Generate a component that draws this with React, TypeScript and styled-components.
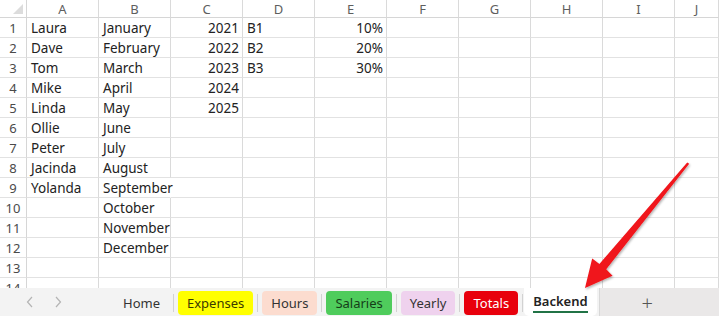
import styled, { createGlobalStyle } from "styled-components";

const GlobalStyle = createGlobalStyle`
  html, body { margin: 0; padding: 0; background: #fff; }
  body { font-family: "Noto Sans", "Liberation Sans", sans-serif; }
`;

const Frame = styled.div`
  position: relative;
  width: 719px;
  height: 316px;
  display: flex;
  flex-direction: column;
  overflow: hidden;
  background: #fff;
`;

const Sheet = styled.div`
  flex: 1;
  display: grid;
  grid-template-columns: 27px repeat(9, 72px) 1fr;
  grid-auto-rows: 20px;
  grid-template-rows: 18px;
  overflow: hidden;
  color: #222;
`;

const Corner = styled.div`
  position: relative;
  border-right: 1px solid #d6d6d6;
  border-bottom: 1px solid #d6d6d6;
  &::after {
    content: "";
    position: absolute;
    right: 3px;
    bottom: 3px;
    border-left: 10px solid transparent;
    border-bottom: 10px solid #dcdcdc;
  }
`;

const ColHead = styled.div`
  display: flex;
  align-items: center;
  justify-content: center;
  font-size: 13px;
  color: #5e5e5e;
  border-right: 1px solid #dadada;
  border-bottom: 1px solid #d6d6d6;
`;

const RowHead = styled.div`
  display: flex;
  align-items: center;
  justify-content: center;
  font-size: 13px;
  color: #4a4a4a;
  border-right: 1px solid #d6d6d6;
  border-bottom: 1px solid #e2e2e2;
`;

const Cell = styled.div<{ $right?: boolean; $spill?: boolean }>`
  display: flex;
  align-items: center;
  justify-content: ${(p) => (p.$right ? "flex-end" : "flex-start")};
  padding: 0 ${(p) => (p.$right ? "3px" : "4px")};
  font-size: 13.5px;
  white-space: nowrap;
  overflow: ${(p) => (p.$spill ? "visible" : "hidden")};
  border-right: ${(p) => (p.$spill ? "1px solid transparent" : "1px solid #dadada")};
  border-bottom: 1px solid #e2e2e2;
  position: relative;
  z-index: ${(p) => (p.$spill ? 1 : 0)};
`;

const TabBar = styled.div`
  height: 28px;
  display: flex;
  align-items: stretch;
  background: #f3f3f3;
  font-size: 13px;
`;

const Nav = styled.div`
  width: 114px;
  display: flex;
  align-items: center;
  gap: 20px;
  padding-left: 26px;
  box-sizing: border-box;
  color: #b4b4b4;
`;

const Tabs = styled.div`
  display: flex;
  align-items: center;
`;

const Tab = styled.div<{ $bg: string; $fg: string }>`
  height: 24px;
  margin-top: 2px;
  display: flex;
  align-items: center;
  padding: 0 9px;
  border-radius: 4px;
  background: ${(p) => p.$bg};
  color: ${(p) => p.$fg};
`;

const Sep = styled.div`
  width: 1px;
  height: 18px;
  margin: 2px 4px 0;
  background: #d2d2d2;
`;

const ActiveTab = styled.div`
  align-self: stretch;
  display: flex;
  flex-direction: column;
  align-items: center;
  justify-content: center;
  padding: 0 9px;
  background: #fff;
  border-radius: 0 0 5px 5px;
  font-weight: 600;
  color: #222;
  margin-left: -3px;
`;

const Underline = styled.div`
  width: 100%;
  height: 2px;
  margin-top: 1px;
  background: #217346;
`;

const AddArea = styled.div`
  flex: 1;
  display: flex;
  align-items: center;
  padding-left: 42px;
  background: #eae8e8;
  border-left: 1px solid #d8d8d8;
  margin-left: 2px;
  color: #555;
  font-size: 20px;
  font-weight: 300;
`;

const Overlay = styled.svg`
  position: absolute;
  left: 0;
  top: 0;
  pointer-events: none;
`;

type C = { t: string; r?: boolean; s?: boolean };

const cols = ["A", "B", "C", "D", "E", "F", "G", "H", "I", "J"];
const names = ["Laura", "Dave", "Tom", "Mike", "Linda", "Ollie", "Peter", "Jacinda", "Yolanda"];
const months = ["January", "February", "March", "April", "May", "June", "July", "August", "September", "October", "November", "December"];
const years = ["2021", "2022", "2023", "2024", "2025"];
const codes = ["B1", "B2", "B3"];
const pct = ["10%", "20%", "30%"];

const rowData = (i: number): C[] => [
  { t: names[i] ?? "" },
  { t: months[i] ?? "", s: i === 8 },
  { t: years[i] ?? "", r: true },
  { t: codes[i] ?? "" },
  { t: pct[i] ?? "", r: true },
  { t: "" }, { t: "" }, { t: "" }, { t: "" }, { t: "" },
];

const tabs = [
  { name: "Home", bg: "transparent", fg: "#333" },
  { name: "Expenses", bg: "#ffff00", fg: "#3a3a00" },
  { name: "Hours", bg: "#fcdccf", fg: "#333" },
  { name: "Salaries", bg: "#4fcc5c", fg: "#153d18" },
  { name: "Yearly", bg: "#efd2ee", fg: "#333" },
  { name: "Totals", bg: "#e8000c", fg: "#fff" },
];

export default function App() {
  return (
    <Frame>
      <GlobalStyle />
      <Sheet>
        <Corner />
        {cols.map((c) => (
          <ColHead key={c}>{c}</ColHead>
        ))}
        {Array.from({ length: 14 }, (_, i) => [
          <RowHead key={`h${i}`}>{i + 1}</RowHead>,
          ...rowData(i).map((c, j) => (
            <Cell key={`${i}-${j}`} $right={c.r} $spill={c.s}>
              {c.t}
            </Cell>
          )),
        ])}
      </Sheet>
      <TabBar>
        <Nav>
          <svg width="8" height="12" viewBox="0 0 8 12">
            <path d="M6 1 L1.5 6 L6 11" fill="none" stroke="currentColor" strokeWidth="1.2" />
          </svg>
          <svg width="8" height="12" viewBox="0 0 8 12">
            <path d="M2 1 L6.5 6 L2 11" fill="none" stroke="currentColor" strokeWidth="1.2" />
          </svg>
        </Nav>
        <Tabs>
          {tabs.map((t) => [
            <Tab key={t.name} $bg={t.bg} $fg={t.fg}>
              {t.name}
            </Tab>,
            <Sep key={`${t.name}-s`} />,
          ])}
        </Tabs>
        <ActiveTab>
          <span>Backend</span>
          <Underline />
        </ActiveTab>
        <AddArea>+</AddArea>
      </TabBar>
      <Overlay width="719" height="316" viewBox="0 0 719 316">
        <defs>
          <filter id="sh" x="-20%" y="-20%" width="140%" height="140%">
            <feDropShadow dx="1" dy="1.5" stdDeviation="1.2" floodColor="#000" floodOpacity="0.3" />
          </filter>
        </defs>
        <polygon
          filter="url(#sh)"
          fill="#f0141a"
          points="687.2,162.4 689.2,163.8 606.2,269.2 612.5,275.8 585,288 592.2,258.5 599.4,264"
        />
      </Overlay>
    </Frame>
  );
}
